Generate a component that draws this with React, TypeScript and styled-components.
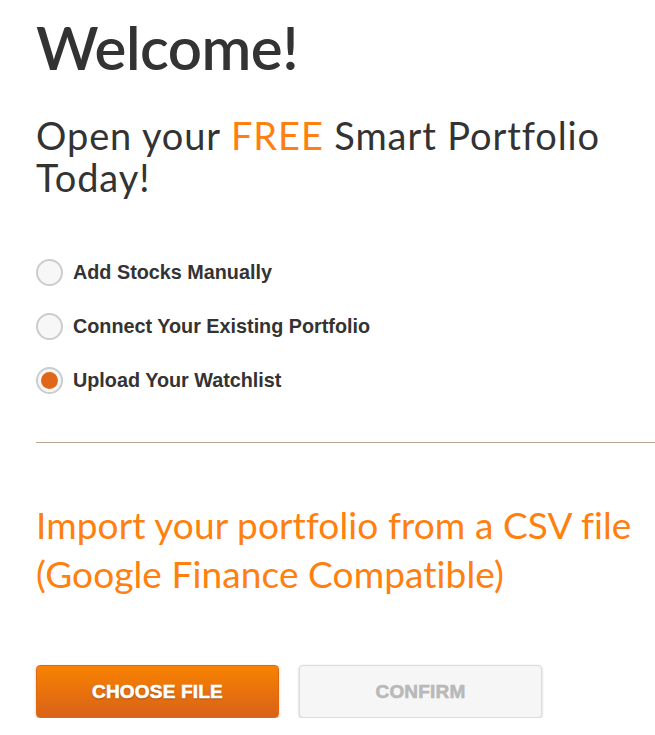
import React, { useState } from "react";
import styled, { createGlobalStyle } from "styled-components";

const Global = createGlobalStyle`
  html, body { margin: 0; padding: 0; background: #fff; }
  body { font-family: Lato, "Liberation Sans", sans-serif; color: #333; }
`;

const Page = styled.div`
  padding: 14px 0 0 36px;
  width: 655px;
  box-sizing: border-box;
  overflow: hidden;
`;

const Title = styled.h1`
  margin: 0;
  font-family: Lato, sans-serif;
  font-weight: 600;
  font-size: 60px;
  line-height: 66px;
  color: #333;
  letter-spacing: -0.5px;
`;

const Subtitle = styled.h2`
  margin: 34px 0 0;
  font-family: Lato, sans-serif;
  font-weight: 400;
  font-size: 38px;
  line-height: 42px;
  letter-spacing: 0.9px;
  color: #333;
`;

const Orange = styled.span`
  color: #ff7f11;
`;

const Options = styled.div`
  margin-top: 61px;
  display: flex;
  flex-direction: column;
  gap: 27px;
`;

const Option = styled.label`
  display: flex;
  align-items: center;
  gap: 10px;
  font-family: "Liberation Sans", Arial, sans-serif;
  font-weight: 700;
  font-size: 19.8px;
  line-height: 27px;
  color: #333;
  cursor: pointer;
`;

const Radio = styled.span<{ $checked: boolean }>`
  width: 23px;
  height: 23px;
  border-radius: 50%;
  border: 2px solid #ccc;
  background: #f7f7f7;
  display: flex;
  align-items: center;
  justify-content: center;
  flex-shrink: 0;
  &::after {
    content: "";
    width: 17px;
    height: 17px;
    border-radius: 50%;
    background: ${(p) => (p.$checked ? "#e0661a" : "transparent")};
  }
`;

const Divider = styled.hr`
  margin: 48px 0 0;
  border: 0;
  height: 1px;
  background: #b9a58f;
`;

const ImportTitle = styled.h3`
  margin: 57px 0 0;
  font-family: Lato, sans-serif;
  font-weight: 400;
  font-size: 37px;
  line-height: 49px;
  letter-spacing: 0.1px;
  color: #ff7f0f;
`;

const Buttons = styled.div`
  margin-top: 67px;
  display: flex;
  gap: 20px;
`;

const Button = styled.button<{ $primary?: boolean }>`
  width: 243px;
  height: 53px;
  border-radius: 4px;
  font-family: "Liberation Sans", Arial, sans-serif;
  font-weight: 700;
  font-size: 19px;
  text-transform: uppercase;
  letter-spacing: 0.2px;
  -webkit-text-stroke: 0.6px currentColor;
  cursor: pointer;
  box-shadow: 0 1px 3px rgba(0, 0, 0, 0.2);
  border: 1px solid ${(p) => (p.$primary ? "#e06a10" : "#dcdcdc")};
  background: ${(p) =>
    p.$primary ? "linear-gradient(#f88200, #d9621a)" : "#f6f6f6"};
  color: ${(p) => (p.$primary ? "#fff" : "#b9b9b9")};
  text-shadow: ${(p) => (p.$primary ? "0 1px 2px rgba(0,0,0,0.35)" : "none")};
`;

const options = [
  "Add Stocks Manually",
  "Connect Your Existing Portfolio",
  "Upload Your Watchlist",
];

export default function App() {
  const [sel, setSel] = useState(2);
  return (
    <>
      <Global />
      <Page>
        <Title>Welcome!</Title>
        <Subtitle>
          Open your <Orange>FREE</Orange> Smart Portfolio
          <br />
          Today!
        </Subtitle>
        <Options>
          {options.map((o, i) => (
            <Option key={o} onClick={() => setSel(i)}>
              <Radio $checked={sel === i} />
              {o}
            </Option>
          ))}
        </Options>
        <Divider />
        <ImportTitle>
          Import your portfolio from a CSV file
          <br />
          (Google Finance Compatible)
        </ImportTitle>
        <Buttons>
          <Button $primary>Choose File</Button>
          <Button>Confirm</Button>
        </Buttons>
      </Page>
    </>
  );
}
